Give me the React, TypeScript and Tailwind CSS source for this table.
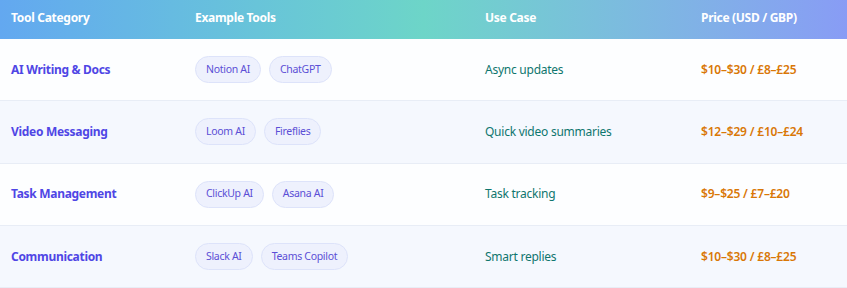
import React from "react";

const rows = [
  {
    category: "AI Writing & Docs",
    tools: ["Notion AI", "ChatGPT"],
    useCase: "Async updates",
    price: "$10–$30 / £8–£25",
  },
  {
    category: "Video Messaging",
    tools: ["Loom AI", "Fireflies"],
    useCase: "Quick video summaries",
    price: "$12–$29 / £10–£24",
  },
  {
    category: "Task Management",
    tools: ["ClickUp AI", "Asana AI"],
    useCase: "Task tracking",
    price: "$9–$25 / £7–£20",
  },
  {
    category: "Communication",
    tools: ["Slack AI", "Teams Copilot"],
    useCase: "Smart replies",
    price: "$10–$30 / £8–£25",
  },
];

const App = () => {
  return (
    <div className="w-[847px] h-[288px] overflow-hidden bg-white font-['Noto_Sans',sans-serif]">
      {/* Header */}
      <div className="grid grid-cols-[184px_290px_216px_1fr] h-[39px] pb-[3px] items-center bg-gradient-to-r from-[#63a8f0] via-[#6dd5c8] to-[#889cf5] text-white text-[12px] tracking-[-0.3px] font-bold">
        <div className="pl-[11px]">Tool Category</div>
        <div className="pl-[11px]">Example Tools</div>
        <div className="pl-[11px]">Use Case</div>
        <div className="pl-[11px]">Price (USD / GBP)</div>
      </div>

      {/* Rows */}
      {rows.map((row, i) => (
        <div
          key={row.category}
          className={`grid grid-cols-[184px_290px_216px_1fr] h-[62.3px] items-center border-b border-[#e8edf6] text-[12px] ${
            i % 2 === 0 ? "bg-[#fdfeff]" : "bg-[#f5f8fe]"
          }`}
        >
          <div className="pl-[11px] font-bold tracking-[-0.3px] text-[#4f46e5]">{row.category}</div>
          <div className="pl-[11px] flex gap-[8px]">
            {row.tools.map((tool) => (
              <span
                key={tool}
                className="h-[27px] px-[10px] flex items-center rounded-full bg-[#eef1fd] border border-[#dde3fa] text-[10.5px] tracking-[-0.3px] text-[#5b4fd6]"
              >
                {tool}
              </span>
            ))}
          </div>
          <div className="pl-[11px] tracking-[-0.25px] text-[#0f766e]">{row.useCase}</div>
          <div className="pl-[11px] tracking-[-0.2px] font-semibold text-[#d97706]">{row.price}</div>
        </div>
      ))}
    </div>
  );
};

export default App;
